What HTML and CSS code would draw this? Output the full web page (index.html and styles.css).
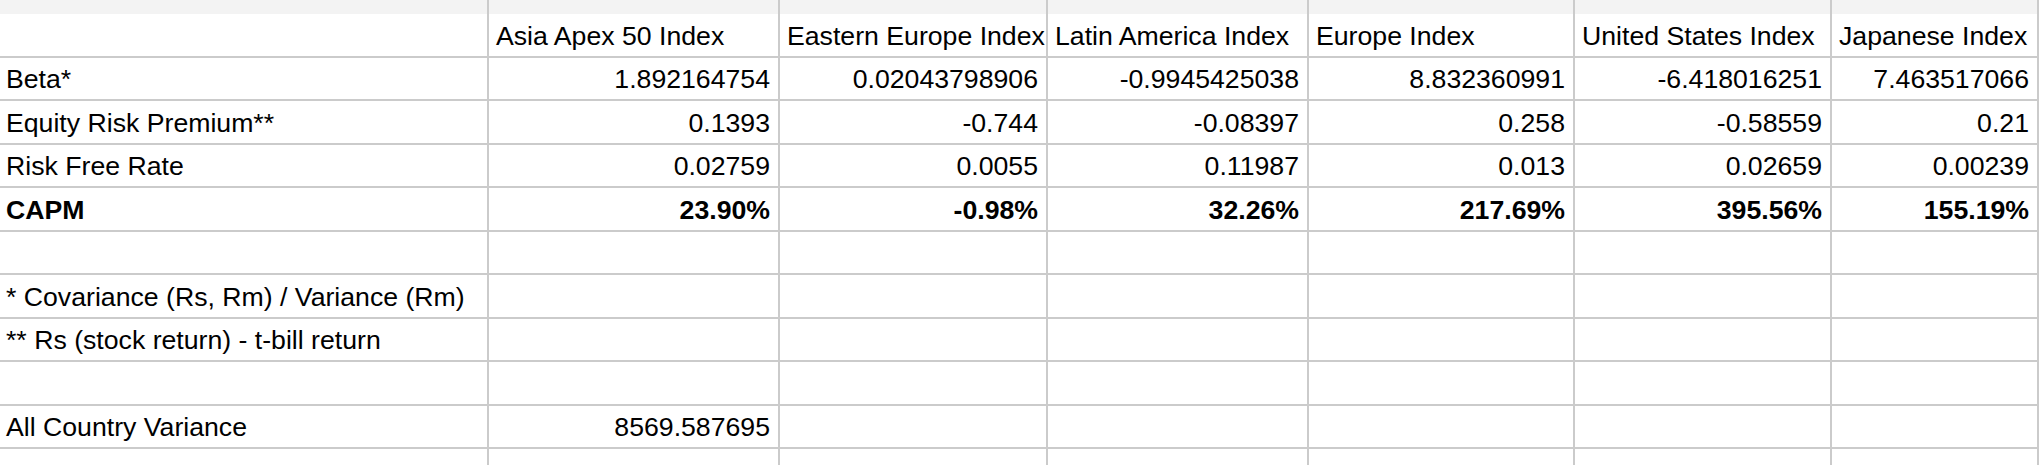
FILE: index.html
```html
<!DOCTYPE html>
<html lang="en">
<head>
    <meta charset="UTF-8">
    <title>CAPM</title>
    <link rel="stylesheet" href="styles.css">
</head>
<body>
    <div class="sheet">
        <!-- top strip of the row above -->
        <div class="cell strip"></div><div class="cell strip"></div><div class="cell strip"></div><div class="cell strip"></div><div class="cell strip"></div><div class="cell strip"></div><div class="cell strip"></div>

        <div class="cell"></div>
        <div class="cell">Asia Apex 50 Index</div>
        <div class="cell">Eastern Europe Index</div>
        <div class="cell">Latin America Index</div>
        <div class="cell">Europe Index</div>
        <div class="cell">United States Index</div>
        <div class="cell">Japanese Index</div>

        <div class="cell">Beta*</div>
        <div class="cell num">1.892164754</div>
        <div class="cell num">0.02043798906</div>
        <div class="cell num">-0.9945425038</div>
        <div class="cell num">8.832360991</div>
        <div class="cell num">-6.418016251</div>
        <div class="cell num">7.463517066</div>

        <div class="cell">Equity Risk Premium**</div>
        <div class="cell num">0.1393</div>
        <div class="cell num">-0.744</div>
        <div class="cell num">-0.08397</div>
        <div class="cell num">0.258</div>
        <div class="cell num">-0.58559</div>
        <div class="cell num">0.21</div>

        <div class="cell">Risk Free Rate</div>
        <div class="cell num">0.02759</div>
        <div class="cell num">0.0055</div>
        <div class="cell num">0.11987</div>
        <div class="cell num">0.013</div>
        <div class="cell num">0.02659</div>
        <div class="cell num">0.00239</div>

        <div class="cell bold">CAPM</div>
        <div class="cell num bold">23.90%</div>
        <div class="cell num bold">-0.98%</div>
        <div class="cell num bold">32.26%</div>
        <div class="cell num bold">217.69%</div>
        <div class="cell num bold">395.56%</div>
        <div class="cell num bold">155.19%</div>

        <div class="cell"></div><div class="cell"></div><div class="cell"></div><div class="cell"></div><div class="cell"></div><div class="cell"></div><div class="cell"></div>

        <div class="cell">* Covariance (Rs, Rm) / Variance (Rm)</div>
        <div class="cell"></div><div class="cell"></div><div class="cell"></div><div class="cell"></div><div class="cell"></div><div class="cell"></div>

        <div class="cell">** Rs (stock return) - t-bill return</div>
        <div class="cell"></div><div class="cell"></div><div class="cell"></div><div class="cell"></div><div class="cell"></div><div class="cell"></div>

        <div class="cell"></div><div class="cell"></div><div class="cell"></div><div class="cell"></div><div class="cell"></div><div class="cell"></div><div class="cell"></div>

        <div class="cell">All Country Variance</div>
        <div class="cell num">8569.587695</div>
        <div class="cell"></div><div class="cell"></div><div class="cell"></div><div class="cell"></div><div class="cell"></div>

        <div class="cell"></div><div class="cell"></div><div class="cell"></div><div class="cell"></div><div class="cell"></div><div class="cell"></div><div class="cell"></div>
    </div>
</body>
</html>
```

FILE: styles.css
```css
body {
    margin: 0;
    padding: 0;
    background-color: white;
    font-family: "Liberation Sans", Arial, sans-serif;
    color: #000;
    overflow: hidden;
}

.sheet {
    display: grid;
    grid-template-columns: 489px 291px 268px 261px 266px 257px 1fr;
    grid-template-rows: 14px;
    grid-auto-rows: 43.5px;
}

.cell {
    box-sizing: border-box;
    display: flex;
    align-items: flex-end;
    padding: 0 7px 5px 7px;
    border-right: 2px solid #cbcbcb;
    border-bottom: 2px solid #cbcbcb;
    font-size: 26.67px;
    line-height: 30px;
    white-space: nowrap;
}

.cell:nth-child(7n+1) {
    padding-left: 6px;
}

.strip {
    padding: 0;
    border-bottom: none;
    background-color: #f3f3f3;
}

.num {
    justify-content: flex-end;
    padding-right: 8px;
}

.bold {
    font-weight: bold;
}
```
